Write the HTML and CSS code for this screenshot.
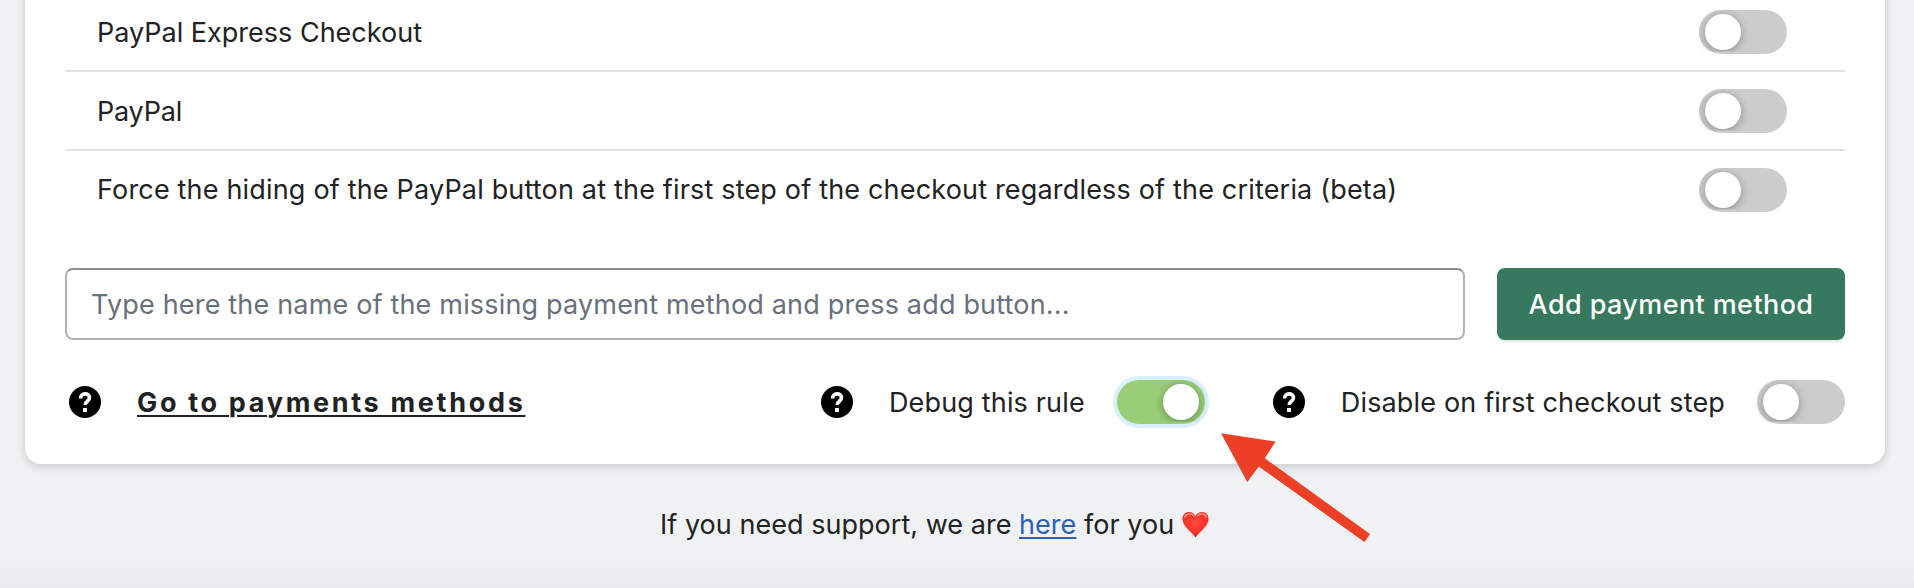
FILE: index.html
```
<!DOCTYPE html>
<html lang="en">
<head>
    <meta charset="UTF-8">
    <meta name="viewport" content="width=device-width, initial-scale=1.0">
    <title>Payment rule</title>
    <link rel="stylesheet" href="styles.css">
</head>
<body>

<svg class="sprite" aria-hidden="true">
    <symbol id="icon-help" viewBox="0 0 32 32">
        <circle cx="16" cy="16" r="16" fill="#000"/>
        <path d="M11.6 12.4c0-2.900 1.900-4.500 4.400-4.500s4.500 1.500 4.500 3.900c0 3.500-4.400 3.400-4.400 7.200" fill="none" stroke="#fff" stroke-width="3.600"/>
        <rect x="14" y="22" width="4" height="4" fill="#fff"/>
    </symbol>
</svg>

<div class="card">
    <ul class="method-list">
        <li class="method">
            <span class="method-name">PayPal Express Checkout</span>
            <label class="toggle"><input type="checkbox"><span class="knob"></span></label>
        </li>
        <li class="method">
            <span class="method-name name-paypal">PayPal</span>
            <label class="toggle"><input type="checkbox"><span class="knob"></span></label>
        </li>
        <li class="method">
            <span class="method-name name-force">Force the hiding of the PayPal button at the first step of the checkout regardless of the criteria (beta)</span>
            <label class="toggle"><input type="checkbox"><span class="knob"></span></label>
        </li>
    </ul>

    <div class="add-row">
        <input type="text" class="add-input" placeholder="Type here the name of the missing payment method and press add button...">
        <button class="btn">Add payment method</button>
    </div>

    <div class="options">
        <svg class="help"><use href="#icon-help"/></svg>
        <a href="#" class="methods-link">Go to payments methods</a>
        <div class="option option-debug">
            <svg class="help"><use href="#icon-help"/></svg>
            <span class="option-name">Debug this rule</span>
            <label class="toggle on"><input type="checkbox" checked><span class="knob"></span></label>
        </div>
        <div class="option">
            <svg class="help"><use href="#icon-help"/></svg>
            <span class="option-name">Disable on first checkout step</span>
            <label class="toggle"><input type="checkbox"><span class="knob"></span></label>
        </div>
    </div>
</div>

<p class="support">
    <span>If you need support, we are <a href="#">here</a> for you</span>
    <svg class="heart" viewBox="0 0 27 27">
        <defs>
            <radialGradient id="heart-fill" cx="50%" cy="40%" r="65%">
                <stop offset="0" stop-color="#ff4a3d"/>
                <stop offset="0.7" stop-color="#fb2f26"/>
                <stop offset="1" stop-color="#d41512"/>
            </radialGradient>
        </defs>
        <path d="M13.5 26.500C10 21 0.5 15.500 0.500 8C0.500 3.500 3.500 1 7 1C10 1 12.500 2.800 13.500 5.200C14.500 2.800 17 1 20 1C23.500 1 26.500 3.500 26.500 8C26.500 15.500 17 21 13.500 26.500Z" fill="url(#heart-fill)"/>
        <path d="M2.500 6.500C3.500 2.500 9.500 1.500 12 5.500M15.500 5C18 1.500 23.500 2.500 24.500 6.500" fill="none" stroke="#ffa196" stroke-width="1.300"/>
    </svg>
</p>

<svg class="arrow" viewBox="0 0 150 110">
    <path d="M0 0.300L54.700 8.500L43.800 25.300L149 101L143.500 109L37.800 33.500L26.300 49Z" fill="#ec4026"/>
</svg>

</body>
</html>
```
FILE: styles.css
```
* {
    box-sizing: border-box;
}

body {
    font-family: Inter, "Liberation Sans", sans-serif;
    font-size: 27px;
    line-height: 40px;
    margin: 0;
    height: 588px;
    overflow: hidden;
    position: relative;
    background: linear-gradient(#f0f1f3 0, #f0f1f3 555px, #eaebed 588px);
    color: #202223;
}

.sprite {
    display: none;
}

.card {
    margin: -20px 29px 0 25px;
    height: 484px;
    padding: 13px 40px 0;
    background-color: #fff;
    border-radius: 0 0 16px 16px;
    box-shadow: 0 0 10px rgba(23, 24, 24, 0.08), 0 4px 10px rgba(0, 0, 0, 0.11);
}

.method-list {
    list-style: none;
    margin: 0;
    padding: 0;
}

.method {
    display: flex;
    align-items: center;
    justify-content: space-between;
    height: 79px;
    padding: 0 58px 0 32px;
    border-bottom: 2px solid #e1e0e5;
}

.method:last-child {
    height: 77px;
    border-bottom: none;
}

.method-name,
.option-name,
.methods-link {
    padding-top: 2px;
    white-space: nowrap;
}

.name-paypal {
    letter-spacing: -0.2px;
}

.name-force {
    padding-top: 0;
    letter-spacing: 0.178px;
}

.toggle {
    flex: none;
    display: block;
    width: 88px;
    height: 44px;
    padding: 4px 6px;
    border-radius: 22px;
    background-color: #ccc;
}

.toggle input {
    display: none;
}

.knob {
    display: block;
    width: 36px;
    height: 36px;
    border-radius: 50%;
    background-color: #fff;
    box-shadow: 0 2px 10px rgba(0, 0, 0, 0.32);
    clip-path: inset(-4px -12px -2px -6px);
}

.toggle.on {
    background-color: #98ce76;
    box-shadow: 0 0 0 4px #daeffc;
}

.toggle.on .knob {
    margin-left: auto;
}

.add-row {
    display: flex;
    gap: 32px;
    margin-top: 40px;
}

.add-input {
    flex: 1;
    height: 72px;
    padding: 0 24px;
    border: 2px solid #aeb4bb;
    border-top-color: #898f94;
    border-radius: 8px;
    background-color: #fff;
    font-family: inherit;
    font-size: 27px;
    letter-spacing: 0.178px;
}

.add-input::placeholder {
    color: #68707b;
    opacity: 1;
}

.btn {
    width: 348px;
    height: 72px;
    padding: 0;
    border: none;
    border-radius: 8px;
    background-color: #36795e;
    box-shadow: 0 2px 2px rgba(0, 0, 0, 0.1);
    color: #fff;
    font-family: inherit;
    font-size: 27px;
    font-weight: 500;
    letter-spacing: 0.4px;
}

.options {
    display: flex;
    align-items: center;
    height: 44px;
    margin-top: 40px;
    padding-left: 4px;
}

.help {
    flex: none;
    width: 32px;
    height: 32px;
}

.methods-link {
    margin-left: 36px;
    color: #202223;
    font-weight: 700;
    letter-spacing: 2.68px;
    text-decoration-thickness: 2px;
    text-underline-offset: 3px;
}

.option {
    display: flex;
    align-items: center;
}

.option-debug {
    margin-left: auto;
    margin-right: 68px;
}

.option-name {
    margin: 0 32px 0 36px;
    letter-spacing: 0.16px;
}

.support {
    display: flex;
    align-items: center;
    margin: 41px 0 0 660px;
    letter-spacing: 0.03px;
    white-space: nowrap;
}

.support a {
    color: #2c5fb9;
    text-decoration-thickness: 2px;
    text-underline-offset: 3px;
}

.heart {
    width: 27px;
    height: 27px;
    margin: 0 0 2px 8px;
}

/* pointer laid over the card edge */
.arrow {
    position: absolute;
    left: 1221px;
    top: 433px;
    width: 150px;
    height: 110px;
}
```
